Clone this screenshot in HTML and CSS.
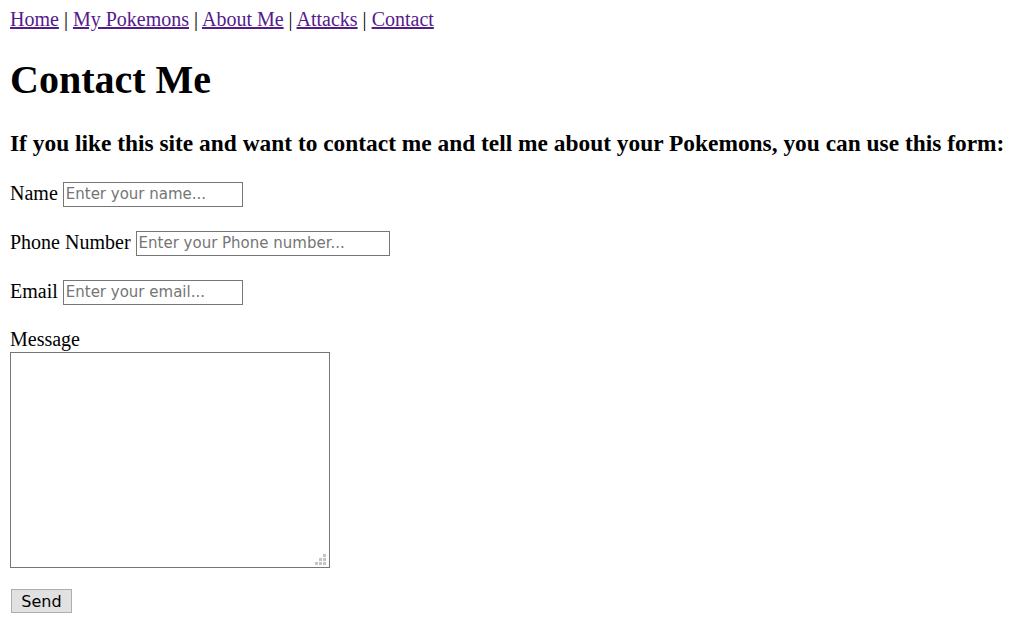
FILE: index.html
```html
<!DOCTYPE html>
<html lang="en">
<head>
<meta charset="utf-8">
<title>Contact Me</title>
<link rel="stylesheet" href="styles.css">
</head>
<body>
<nav class="nav"><a href="#" class="nav-link">Home</a> | <a href="#" class="nav-link">My Pokemons</a> | <a href="#" class="nav-link">About Me</a> | <a href="#" class="nav-link">Attacks</a> | <a href="#" class="nav-link">Contact</a></nav>
<h1 class="title">Contact Me</h1>
<h3 class="intro">If you like this site and want to contact me and tell me about your Pokemons, you can use this form:</h3>
<form class="form">
  <p class="field"><label class="label" for="name">Name</label> <input class="input input-short" id="name" type="text" placeholder="Enter your name..."></p>
  <p class="field"><label class="label" for="phone">Phone Number</label> <input class="input input-long" id="phone" type="text" placeholder="Enter your Phone number..."></p>
  <p class="field"><label class="label" for="email">Email</label> <input class="input input-short" id="email" type="text" placeholder="Enter your email..."></p>
  <div class="field-message">
    <label class="label label-block" for="message">Message</label>
    <div class="textarea-wrap">
      <textarea class="textarea" id="message"></textarea>
      <svg class="grip" width="11" height="11" viewBox="0 0 11 11" aria-hidden="true">
        <rect x="8" y="0" width="3" height="3" fill="#c4c4c4"/>
        <rect x="4" y="4" width="3" height="3" fill="#c4c4c4"/>
        <rect x="8" y="4" width="3" height="3" fill="#c4c4c4"/>
        <rect x="0" y="8" width="3" height="3" fill="#c4c4c4"/>
        <rect x="4" y="8" width="3" height="3" fill="#c4c4c4"/>
        <rect x="8" y="8" width="3" height="3" fill="#c4c4c4"/>
      </svg>
    </div>
  </div>
  <button class="send" type="button">Send</button>
</form>
</body>
</html>
```
FILE: styles.css
```css
html, body {
  background: #ffffff;
}
body {
  margin: 10px;
  font-family: "Liberation Serif", "Times New Roman", serif;
  font-size: 20px;
  color: #000000;
}
.nav {
  line-height: 19px;
}
.nav-link {
  color: #551a8b;
  text-decoration: underline;
}
.title {
  font-size: 40px;
  font-weight: bold;
  margin: 27px 0;
  line-height: 47px;
}
.intro {
  font-size: 23.4px;
  font-weight: bold;
  margin: 23px 0;
  line-height: 26px;
  white-space: nowrap;
}
.form {
  margin: 0;
}
.field {
  margin: 20px 0;
  line-height: 29px;
}
.input {
  font-family: "DejaVu Sans", Tahoma, sans-serif;
  font-size: 15px;
  height: 25px;
  box-sizing: border-box;
  border: 1px solid #767676;
  padding: 1px 2px;
  vertical-align: 1px;
  color: #000;
}
.input::placeholder {
  color: #757575;
}
.input-short {
  width: 180px;
}
.input-long {
  width: 254px;
}
.field-message {
  margin: 22px 0 20px;
}
.label-block {
  display: block;
  line-height: 23px;
}
.textarea-wrap {
  position: relative;
  width: 320px;
  height: 216px;
  margin-top: 1px;
}
.textarea {
  display: block;
  width: 320px;
  height: 216px;
  box-sizing: border-box;
  border: 1px solid #767676;
  margin: 0;
  padding: 2px;
  resize: none;
  font-family: "Liberation Mono", monospace;
}
.grip {
  position: absolute;
  right: 4px;
  bottom: 3px;
}
.send {
  display: block;
  margin: 21px 0 0 1px;
  width: 61px;
  height: 24px;
  box-sizing: border-box;
  border: 1px solid #adadad;
  background: #e1e1e1;
  font-family: "DejaVu Sans", Tahoma, sans-serif;
  font-size: 16px;
  color: #000;
  padding: 0;
  border-radius: 0;
}
```
